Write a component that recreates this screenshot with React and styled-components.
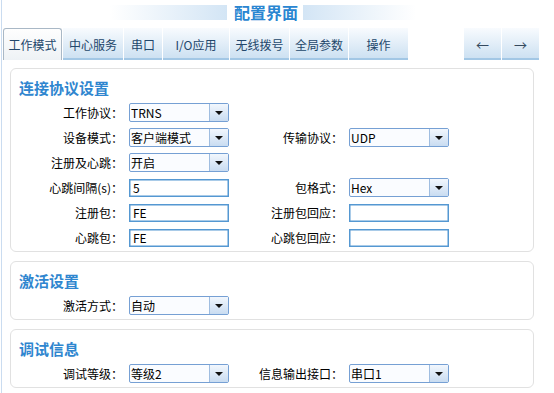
import styled, { createGlobalStyle } from 'styled-components';

const GlobalStyle = createGlobalStyle`
  body {
    margin: 0;
    background: #fff;
    font-family: 'Noto Sans CJK SC', 'Liberation Sans', sans-serif;
    font-size: 12px;
    color: #000;
  }
`;

const Page = styled.div`
  width: 553px;
  height: 393px;
  margin-left: 1px;
  border-left: 1px solid #cadcf0;
  box-sizing: border-box;
  overflow: hidden;
`;

const Header = styled.div`
  display: flex;
  align-items: center;
  height: 24px;
  padding-left: 108px;
`;

const HeaderBar = styled.div`
  width: ${({ w }) => w}px;
  height: 15px;
  background: linear-gradient(
    ${({ dir }) => (dir === 'left' ? 'to right' : 'to left')},
    #ffffff,
    #d3e5f5
  );
`;

const HeaderTitle = styled.div`
  font-size: 16px;
  font-weight: bold;
  color: #2a86d1;
  line-height: 20px;
  margin: 0 5px 0 7px;
`;

const TabBar = styled.div`
  display: flex;
  align-items: flex-end;
  gap: 1px;
  height: 32px;
  margin-top: 4px;
  padding-left: 1px;
  padding-right: 15px;
`;

const Tab = styled.div`
  width: ${({ w }) => w}px;
  height: 32px;
  box-sizing: border-box;
  display: flex;
  align-items: center;
  justify-content: center;
  font-size: 12px;
  color: #23476b;
  background: linear-gradient(#f8fbfe, #cde1f2);
  border-bottom: 2px solid #a2c7e5;
  padding-top: 2px;
  ${({ active }) =>
    active &&
    `
    background: linear-gradient(#fefefe, #eef2f5);
    border: 1px solid #a9b8c6;
    border-bottom: none;
    border-radius: 3px 3px 0 0;
    padding-top: 0;
  `}
`;

const Spacer = styled.div`
  flex: 1;
`;

const ArrowTab = styled(Tab)`
  font-size: 13px;
  color: #34495e;
`;

const Panels = styled.div`
  display: flex;
  flex-direction: column;
  gap: 9px;
  margin: 8px 0 0 8px;
  width: 524px;
`;

const Panel = styled.div`
  border: 1px solid #e1e1e1;
  border-radius: 6px;
  padding: 9px 0 4px;
`;

const PanelTitle = styled.div`
  font-size: 15px;
  font-weight: bold;
  color: #2f86cf;
  line-height: 20px;
  padding-left: 8px;
  margin-bottom: 5px;
`;

const Grid = styled.div`
  display: grid;
  grid-template-columns: 112px 100px 108px 100px;
  column-gap: 6px;
  row-gap: 6px;
  align-items: center;
`;

const Label = styled.div`
  text-align: right;
  white-space: nowrap;
  line-height: 19px;
`;

const SelectBox = styled.div`
  display: flex;
  height: 19px;
  box-sizing: border-box;
  border: 1px solid #76a0d4;
  border-radius: 2px;
  background: #fafcff;
`;

const SelectValue = styled.div`
  flex: 1;
  line-height: 17px;
  padding-left: 1px;
  white-space: nowrap;
  overflow: hidden;
`;

const SelectButton = styled.div`
  width: 18px;
  border-left: 1px solid #9fbde0;
  background: linear-gradient(#f2f7fd, #c9dcf1);
  display: flex;
  align-items: center;
  justify-content: center;
  &::after {
    content: '';
    border-left: 4px solid transparent;
    border-right: 4px solid transparent;
    border-top: 4px solid #111;
  }
`;

const TextBox = styled.div`
  height: 18px;
  box-sizing: border-box;
  border: 1px solid #5598d2;
  box-shadow: inset 0 0 0 0.5px #5598d2;
  background: #fff;
  line-height: 16px;
  padding-left: 3px;
`;

const Select = ({ value }) => (
  <SelectBox>
    <SelectValue>{value}</SelectValue>
    <SelectButton />
  </SelectBox>
);

const tabs = [
  { label: '工作模式', w: 59, active: true },
  { label: '中心服务', w: 60 },
  { label: '串口', w: 38 },
  { label: 'I/O应用', w: 66 },
  { label: '无线拨号', w: 59 },
  { label: '全局参数', w: 58 },
  { label: '操作', w: 59 },
];

export default function App() {
  return (
    <>
      <GlobalStyle />
      <Page>
        <Header>
          <HeaderBar dir="left" w={117} />
          <HeaderTitle>配置界面</HeaderTitle>
          <HeaderBar dir="right" w={113} />
        </Header>
        <TabBar>
          {tabs.map((t) => (
            <Tab key={t.label} w={t.w} active={t.active}>
              {t.label}
            </Tab>
          ))}
          <Spacer />
          <ArrowTab w={37}>←</ArrowTab>
          <ArrowTab w={37}>→</ArrowTab>
        </TabBar>
        <Panels>
          <Panel>
            <PanelTitle>连接协议设置</PanelTitle>
            <Grid>
              <Label>工作协议：</Label>
              <Select value="TRNS" />
              <span />
              <span />
              <Label>设备模式：</Label>
              <Select value="客户端模式" />
              <Label>传输协议：</Label>
              <Select value="UDP" />
              <Label>注册及心跳：</Label>
              <Select value="开启" />
              <span />
              <span />
              <Label>心跳间隔(s)：</Label>
              <TextBox>5</TextBox>
              <Label>包格式：</Label>
              <Select value="Hex" />
              <Label>注册包：</Label>
              <TextBox>FE</TextBox>
              <Label>注册包回应：</Label>
              <TextBox />
              <Label>心跳包：</Label>
              <TextBox>FE</TextBox>
              <Label>心跳包回应：</Label>
              <TextBox />
            </Grid>
          </Panel>
          <Panel>
            <PanelTitle>激活设置</PanelTitle>
            <Grid>
              <Label>激活方式：</Label>
              <Select value="自动" />
            </Grid>
          </Panel>
          <Panel>
            <PanelTitle>调试信息</PanelTitle>
            <Grid>
              <Label>调试等级：</Label>
              <Select value="等级2" />
              <Label>信息输出接口：</Label>
              <Select value="串口1" />
            </Grid>
          </Panel>
        </Panels>
      </Page>
    </>
  );
}
